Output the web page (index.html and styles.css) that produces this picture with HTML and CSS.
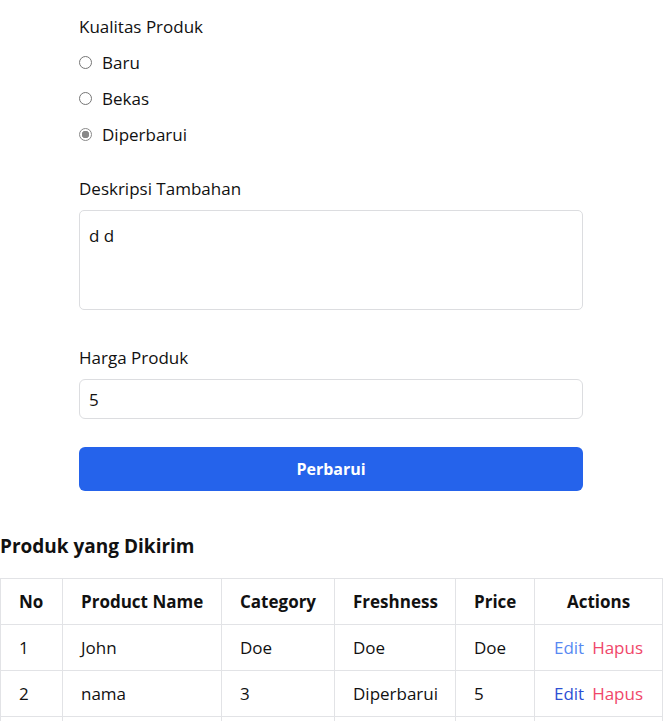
FILE: index.html
```html
<!DOCTYPE html>
<html lang="id">
<head>
<meta charset="utf-8">
<title>Produk</title>
<link rel="stylesheet" href="styles.css">
</head>
<body>
<form class="form">
  <div class="field">
    <span class="label">Kualitas Produk</span>
    <label class="radio-row"><input type="radio" name="q" class="radio"><span>Baru</span></label>
    <label class="radio-row"><input type="radio" name="q" class="radio"><span>Bekas</span></label>
    <label class="radio-row"><input type="radio" name="q" class="radio" checked><span>Diperbarui</span></label>
  </div>
  <div class="field field-desc">
    <label class="label" for="desc">Deskripsi Tambahan</label>
    <textarea id="desc" class="textarea">d d</textarea>
  </div>
  <div class="field field-price">
    <label class="label" for="price">Harga Produk</label>
    <input id="price" class="input" type="text" value="5">
  </div>
  <button type="button" class="btn">Perbarui</button>
</form>

<h2 class="title">Produk yang Dikirim</h2>
<table class="table">
  <colgroup>
    <col class="c1"><col class="c2"><col class="c3"><col class="c4"><col class="c5"><col class="c6">
  </colgroup>
  <thead>
    <tr><th>No</th><th>Product Name</th><th>Category</th><th>Freshness</th><th>Price</th><th class="center">Actions</th></tr>
  </thead>
  <tbody>
    <tr><td>1</td><td>John</td><td>Doe</td><td>Doe</td><td>Doe</td><td class="center"><a class="edit">Edit</a><a class="del">Hapus</a></td></tr>
    <tr><td>2</td><td>nama</td><td>3</td><td>Diperbarui</td><td>5</td><td class="center"><a class="edit edit-dark">Edit</a><a class="del">Hapus</a></td></tr>
    <tr><td>&nbsp;</td><td>&nbsp;</td><td>&nbsp;</td><td>&nbsp;</td><td>&nbsp;</td><td class="center">&nbsp;</td></tr>
  </tbody>
</table>
</body>
</html>
```
FILE: styles.css
```css
* { box-sizing: border-box; }
html, body { margin: 0; padding: 0; background: #fff; }
body {
  font-family: "Open Sans", "Noto Sans", sans-serif;
  font-size: 17px;
  color: #111;
}
.form {
  width: 504px;
  margin-left: 79px;
  padding-top: 15px;
  display: flex;
  flex-direction: column;
}
.field { display: flex; flex-direction: column; }
.label { line-height: 24px; display: block; }
.radio-row {
  display: flex;
  align-items: center;
  gap: 10px;
  height: 36px;
}
.field .label + .radio-row { margin-top: 5px; }
.radio {
  appearance: none;
  -webkit-appearance: none;
  margin: 0;
  width: 13px;
  height: 13px;
  border: 1px solid #767676;
  border-radius: 50%;
  background: #fff;
  flex: none;
}
.radio:checked {
  border-color: #8a8a8a;
  background: radial-gradient(circle, #888 0 3.5px, #fff 4px);
}
.field-desc { margin-top: 25px; }
.textarea {
  margin-top: 9px;
  height: 100px;
  width: 100%;
  border: 1px solid #dcdde0;
  border-radius: 5px;
  padding: 13px 9px;
  font: inherit;
  color: #111;
  resize: none;
  line-height: 24px;
}
.field-price { margin-top: 36px; }
.input {
  margin-top: 9px;
  height: 40px;
  width: 100%;
  border: 1px solid #dcdde0;
  border-radius: 6px;
  padding: 0 9px;
  font: inherit;
  color: #111;
}
.btn {
  margin-top: 28px;
  height: 44px;
  width: 100%;
  border: 0;
  border-radius: 6px;
  background: #2563eb;
  color: #fff;
  font: inherit;
  font-weight: 700;
  font-size: 16px;
}
.title {
  margin: 41px 0 18px;
  font-size: 19px;
  font-weight: 700;
  line-height: 28px;
}
.table {
  border-collapse: collapse;
  width: 662px;
  table-layout: fixed;
}
.c1 { width: 62px; } .c2 { width: 159px; } .c3 { width: 113px; }
.c4 { width: 121px; } .c5 { width: 79px; } .c6 { width: 128px; }
.table th, .table td {
  border: 1px solid #e2e3e6;
  height: 46px;
  padding: 0 18px;
  text-align: left;
  white-space: nowrap;
}
.table th { font-weight: 700; font-size: 17px; }
.table .center { text-align: center; }
.edit { color: #5889f2; margin-right: 8px; }
.edit-dark { color: #2d4fd4; }
.del { color: #f0476a; }
```
